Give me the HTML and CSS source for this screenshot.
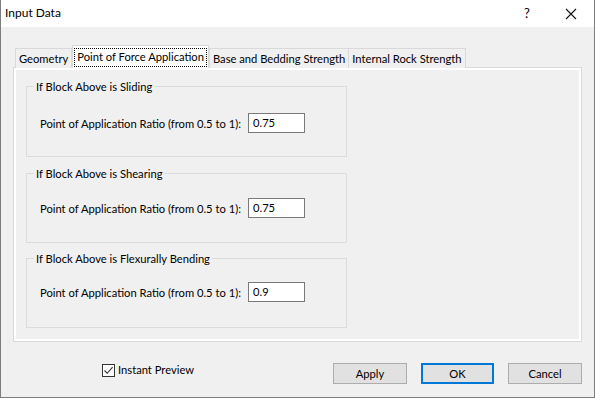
FILE: index.html
```html
<!DOCTYPE html>
<html>
<head>
<meta charset="utf-8">
<link rel="stylesheet" href="styles.css">
</head>
<body>
<div class="window">
  <div class="titlebar">
    <span class="title">Input Data</span>
    <span class="tb-buttons">
      <span class="tb-help">?</span>
      <span class="tb-close"><svg width="12" height="12" viewBox="0 0 12 12"><path d="M1 1 L11 11 M11 1 L1 11" stroke="#111" stroke-width="1.1" fill="none"/></svg></span>
    </span>
  </div>
  <div class="content">
    <div class="tabs">
      <div class="tab">Geometry</div>
      <div class="tab active"><span class="focus">Point of Force Application</span></div>
      <div class="tab">Base and Bedding Strength</div>
      <div class="tab">Internal Rock Strength</div>
    </div>
    <div class="panel">
      <div class="page">
        <fieldset class="group g1">
          <legend>If Block Above is Sliding</legend>
          <div class="row"><span class="label">Point of Application Ratio (from 0.5 to 1):</span><span class="input">0.75</span></div>
        </fieldset>
        <fieldset class="group g2">
          <legend>If Block Above is Shearing</legend>
          <div class="row"><span class="label">Point of Application Ratio (from 0.5 to 1):</span><span class="input">0.75</span></div>
        </fieldset>
        <fieldset class="group g3">
          <legend>If Block Above is Flexurally Bending</legend>
          <div class="row"><span class="label">Point of Application Ratio (from 0.5 to 1):</span><span class="input">0.9</span></div>
        </fieldset>
      </div>
    </div>
    <div class="footer">
      <label class="check"><span class="box"><svg width="11" height="11" viewBox="0 0 11 11"><path d="M1.5 5.5 L4.2 8.3 L9.6 2.2" stroke="#333" stroke-width="1.1" fill="none"/></svg></span>Instant Preview</label>
      <div class="buttons">
        <span class="btn">Apply</span>
        <span class="btn default">OK</span>
        <span class="btn">Cancel</span>
      </div>
    </div>
  </div>
</div>
</body>
</html>
```
FILE: styles.css
```css
* { box-sizing: border-box; }
html, body { margin: 0; padding: 0; background: #f0f0f0; }
body {
  font-family: "Lato", "Noto Sans", sans-serif;
  font-size: 11.2px;
  color: #000;
  width: 595px;
  height: 398px;
  overflow: hidden;
}
.window {
  width: 595px;
  height: 398px;
  border: 1px solid #7d7d7d;
  border-top: none;
  background: #f0f0f0;
  display: flex;
  flex-direction: column;
}
.titlebar {
  height: 27px;
  background: #fff;
  display: flex;
  align-items: center;
  justify-content: space-between;
  padding-left: 4px;
  flex: none;
}
.title { font-size: 12px; position: relative; top: -1px; }
.tb-buttons { display: flex; align-items: center; height: 100%; }
.tb-help { width: 46px; text-align: center; font-size: 13px; position: relative; top: -1px; left: 2px; }
.tb-close { width: 46px; display: flex; justify-content: center; align-items: center; }
.content {
  flex: 1;
  padding: 18px 12px 0 12px;
  display: flex;
  flex-direction: column;
}
.tabs {
  display: flex;
  align-items: flex-end;
  height: 23px;
  margin-left: 2px;
  position: relative;
  z-index: 1;
  margin-bottom: -1px;
}
.tab {
  height: 20px;
  border: 1px solid #d9d9d9;
  border-bottom: none;
  background: #f0f0f0;
  padding: 0 3px;
  line-height: 19px;
  white-space: nowrap;
  margin-left: -1px;
}
.tab:first-child { margin-left: 0; }
.tab.active {
  height: 23px;
  background: #fff;
  padding: 2px 1px 0 1px;
  margin-left: 0;
  border-bottom: none;
}
.tab.active + .tab { margin-left: 0; }
.focus {
  display: block;
  border: 1px dotted #000;
  padding: 0 2px;
  height: 19px;
  line-height: 16px;
}
.panel {
  width: 569px;
  height: 275px;
  border: 1px solid #d9d9d9;
  background: #fff;
  padding: 2px;
  flex: none;
}
.page {
  height: 100%;
  background: #f0f0f0;
  padding: 9px 0 0 10px;
  display: flex;
  flex-direction: column;
  gap: 9px;
}
.group {
  margin: 0;
  width: 321px;
  height: 77px;
  border: 1px solid #dcdcdc;
  padding: 0 0 0 13px;
  min-width: 0;
}
.g1 { height: 78px; }
.g3 { margin-top: -1px; }
.group legend {
  padding: 0 2px;
  margin-left: -6px;
  line-height: 15px;
}
.row {
  display: flex;
  align-items: center;
  margin-top: 17px;
}
.g1 .row { margin-top: 19px; }
.g3 .row { margin-top: 16px; }
.label { width: 208px; white-space: nowrap; }
.input {
  width: 57px;
  height: 20px;
  border: 1px solid #7a7a7a;
  background: #fff;
  padding: 0 4px;
  line-height: 18px;
}
.footer {
  display: flex;
  align-items: flex-start;
  justify-content: space-between;
  padding-top: 21px;
}
.check {
  display: flex;
  align-items: center;
  margin-left: 89px;
  line-height: 14px;
}
.box {
  width: 13px;
  height: 13px;
  border: 1px solid #333;
  background: #fff;
  display: flex;
  align-items: center;
  justify-content: center;
  margin-right: 3px;
}
.buttons { display: flex; gap: 14px; }
.btn {
  width: 74px;
  height: 21px;
  border: 1px solid #adadad;
  background: #e1e1e1;
  text-align: center;
  line-height: 19px;
}
.btn.default {
  border: 2px solid #0078d7;
  line-height: 17px;
  width: 73px;
}
```
